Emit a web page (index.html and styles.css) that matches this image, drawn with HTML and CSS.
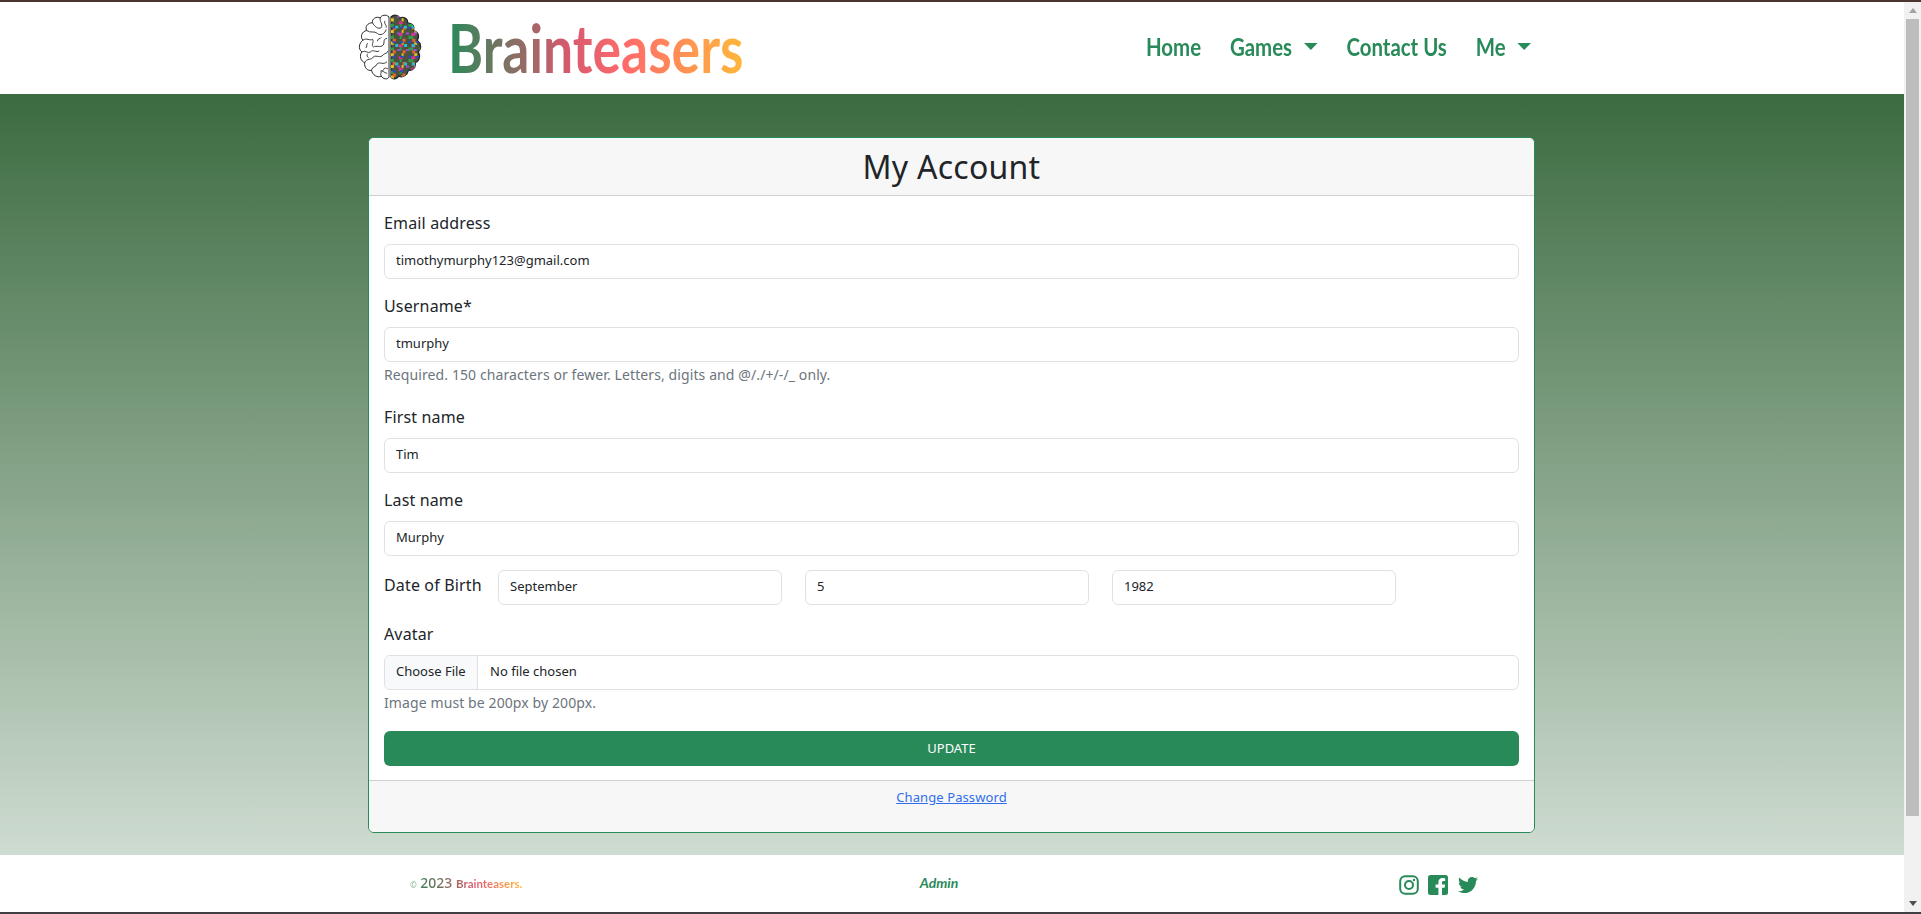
FILE: index.html
```html
<!DOCTYPE html>
<html lang="en">
<head>
  <meta charset="utf-8">
  <title>Brainteasers - My Account</title>
  <link rel="stylesheet" href="styles.css">
</head>
<body>
  <div class="frame">
    <div class="page">
      <header class="site-header">
        <div class="brand">
          <svg class="brain" viewBox="0 0 68 72" aria-hidden="true">
            <defs>
              <path id="lobe" d="M33 4C30 1 25 2 24 5C20 3 15 6 16 10C11 10 8 14 10 18C5 19 3 24 6 28C2 31 1 37 5 40C2 44 4 50 8 51C7 56 11 60 15 59C16 64 21 67 25 65C27 68 31 69 33 66Z"/>
              <clipPath id="right-lobe">
                <use href="#lobe" transform="matrix(-1 0 0 1 68 0)"/>
              </clipPath>
            </defs>
            <!-- left half, outline only -->
            <use href="#lobe" fill="#fff" stroke="#222" stroke-width="1"/>
            <path d="M24 5C23 9 27 11 25 15C22 17 18 14 16 10M10 18C14 21 18 18 21 21C24 24 29 21 30 17M29 8C27 11 31 12 30 15M6 28C10 25 13 29 16 27C18 30 14 33 17 35C20 33 24 36 27 33C29 30 26 27 31 26M5 40C9 38 11 42 14 40C16 37 20 41 23 39M8 51C10 46 15 49 17 45C20 43 24 47 27 43C29 41 31 42 32 39M15 59C15 55 20 56 21 52C24 50 27 54 31 50M25 65C23 61 27 60 28 57C30 56 31 58 32 57M11 31C9 33 11 35 9 36M21 29C21 26 24 27 25 25M12 46C10 45 10 43 11 42M24 60C26 58 28 62 31 62" fill="none" stroke="#222" stroke-width=".9"/>
            <!-- right half, coloured -->
            <use href="#lobe" transform="matrix(-1 0 0 1 68 0)" fill="#4a5240" stroke="#222" stroke-width="1.2"/>
            <g clip-path="url(#right-lobe)" fill="none" stroke-width="3.2">
              <path d="M35 7H66M35 19H66M35 31H66M35 43H66M35 55H66M35 66H66" stroke="#e8c322" stroke-dasharray="3 8 2 11"/>
              <path d="M35 10H66M35 22H66M35 34H66M35 46H66M35 58H66" stroke="#e0308c" stroke-dasharray="4 9" stroke-dashoffset="5"/>
              <path d="M35 13H66M35 25H66M35 37H66M35 49H66M35 61H66" stroke="#2f9f4a" stroke-dasharray="5 6 2 7" stroke-dashoffset="2"/>
              <path d="M35 16H66M35 28H66M35 40H66M35 52H66M35 64H66" stroke="#e8642a" stroke-dasharray="3 7" stroke-dashoffset="8"/>
              <path d="M38 3V70M46 3V70M54 3V70M62 3V70" stroke="#2a49c8" stroke-dasharray="2 13" stroke-dashoffset="4"/>
              <path d="M41 3V70M50 3V70M58 3V70" stroke="#28c0c8" stroke-dasharray="3 16" stroke-dashoffset="9"/>
              <path d="M43 3V70M52 3V70M60 3V70" stroke="#9a4fd0" stroke-dasharray="2 15"/>
            </g>
          </svg>
          <span class="brand-name">Brainteasers</span>
        </div>
        <nav class="main-nav">
          <a href="#">Home</a>
          <a href="#" class="has-caret">Games</a>
          <a href="#">Contact Us</a>
          <a href="#" class="has-caret">Me</a>
        </nav>
      </header>

      <main class="content">
        <section class="card">
          <h1 class="card-header">My Account</h1>
          <form class="card-body">
            <div class="field">
              <label>Email address</label>
              <input class="text-input" type="text" value="timothymurphy123@gmail.com">
            </div>
            <div class="field">
              <label>Username*</label>
              <input class="text-input" type="text" value="tmurphy">
              <small class="help">Required. 150 characters or fewer. Letters, digits and @/./+/-/_ only.</small>
            </div>
            <div class="field">
              <label>First name</label>
              <input class="text-input" type="text" value="Tim">
            </div>
            <div class="field">
              <label>Last name</label>
              <input class="text-input" type="text" value="Murphy">
            </div>
            <div class="field date-row">
              <label>Date of Birth</label>
              <div class="text-input date-part">September</div>
              <div class="text-input date-part">5</div>
              <div class="text-input date-part">1982</div>
            </div>
            <div class="field">
              <label>Avatar</label>
              <div class="text-input file-input">
                <span class="file-button">Choose File</span>
                <span class="file-name">No file chosen</span>
              </div>
              <small class="help">Image must be 200px by 200px.</small>
            </div>
            <button class="update-button" type="button">UPDATE</button>
          </form>
          <div class="card-footer"><a href="#">Change Password</a></div>
        </section>
      </main>

      <footer class="site-footer">
        <div class="copyright"><span class="copyright-text"><span class="copyright-mark">©</span> 2023 <span class="display-font">Brainteasers.</span></span></div>
        <div class="admin"><a href="#">Admin</a></div>
        <div class="social">
          <svg viewBox="0 0 20 20" class="social-icon" aria-hidden="true">
            <rect x="1.2" y="1.2" width="17.6" height="17.6" rx="5" fill="none" stroke="#298a59" stroke-width="2"/>
            <circle cx="10" cy="10" r="4" fill="none" stroke="#298a59" stroke-width="2"/>
            <circle cx="15" cy="5" r="1.2" fill="#298a59"/>
          </svg>
          <svg viewBox="0 0 20 20" class="social-icon" aria-hidden="true">
            <path d="M2.5 0H17.5A2.5 2.5 0 0 1 20 2.5V17.5A2.5 2.5 0 0 1 17.5 20H14V12.8H16.6L17.1 9.6H14V7.7C14 6.8 14.4 6.1 15.7 6.1H17.2V3.4C16.3 3.2 15.4 3.1 14.5 3.1C11.9 3.1 10.4 4.7 10.4 7.3V9.6H7.6V12.8H10.4V20H2.5A2.5 2.5 0 0 1 0 17.5V2.5A2.5 2.5 0 0 1 2.5 0Z" fill="#298a59"/>
          </svg>
          <svg viewBox="0 0 512 512" class="social-icon wide" aria-hidden="true">
            <path d="M459.4 151.7c.3 4.5.3 9.1.3 13.6 0 138.7-105.6 298.6-298.6 298.6-59.5 0-114.7-17.2-161.1-47.1 8.4 1 16.6 1.3 25.3 1.3 49.1 0 94.2-16.6 130.3-44.8-46.1-1-84.8-31.2-98.1-72.8 6.5 1 13 1.6 19.8 1.6 9.4 0 18.8-1.3 27.6-3.6-48.1-9.7-84.1-52-84.1-103v-1.3c14 7.8 30.2 12.7 47.4 13.3-28.3-18.8-46.8-51-46.8-87.4 0-19.5 5.2-37.4 14.3-53 51.7 63.7 129.3 105.3 216.4 109.8-1.6-7.8-2.6-15.9-2.6-24 0-57.8 46.8-104.9 104.9-104.9 30.2 0 57.5 12.7 76.7 33.1 23.7-4.5 46.5-13.3 66.6-25.3-7.8 24-24.4 44.2-46.1 57.2 21.1-2.3 41.6-8.1 60.4-16.2-14.3 20.8-32.2 39.3-52.6 54.3z" fill="#298a59"/>
          </svg>
        </div>
      </footer>
    </div>
    <div class="scrollbar">
      <span class="arrow-up"></span>
      <div class="scrollbar-thumb"></div>
      <span class="arrow-down"></span>
    </div>
  </div>
</body>
</html>
```
FILE: styles.css
```css
* {
  box-sizing: border-box;
}

html, body {
  height: 100%;
  margin: 0;
}

body {
  font-family: "Noto Sans", "Open Sans", sans-serif;
  color: #212529;
  background-color: #444;
}

/* thin window edge: dark line top and bottom of the shot */
.frame {
  display: flex;
  height: 100%;
  padding: 2px 0;
  background: linear-gradient(to bottom, #4c3430 50%, #3c4043 50%);
}

.page {
  flex: 1;
  min-width: 0;
  overflow: hidden;
  background-color: #fff;
}

/* Scrollbar */
.scrollbar {
  display: flex;
  flex-direction: column;
  align-items: center;
  flex: none;
  width: 17px;
  background-color: #f1f1f1;
}

.arrow-up {
  margin: 6px 0 6px;
  border-bottom: 5px solid #a3a3a3;
  border-left: 4px solid transparent;
  border-right: 4px solid transparent;
}

.scrollbar-thumb {
  width: 13px;
  height: 797px;
  background-color: #bdbdbd;
}

.arrow-down {
  margin-top: 85px;
  border-top: 5px solid #505050;
  border-left: 4px solid transparent;
  border-right: 4px solid transparent;
}

/* Header */
.site-header {
  display: flex;
  align-items: center;
  justify-content: space-between;
  height: 92px;
  padding: 0 373px 0 357px;
  background-color: #fff;
}

.brand {
  display: flex;
  align-items: center;
  gap: 25px;
}

.brain {
  width: 66px;
  height: 70px;
}

/* no hand lettered font here, so a big Lato squeezed sideways */
.brand-name {
  font-family: "Lato", sans-serif;
  font-size: 66px;
  font-weight: 700;
  line-height: 70px;
  background: linear-gradient(to right, #298a59 0%, #d4596e 40%, #ff6b6b 60%, #ffb83a 100%);
  -webkit-background-clip: text;
  background-clip: text;
  color: transparent;
  transform: scaleX(.81);
  transform-origin: left center;
}

.main-nav {
  display: flex;
  align-items: center;
  gap: 34px;
  margin-top: -3px;
  transform: scaleX(.85);
  transform-origin: right center;
}

.main-nav a {
  font-family: "Lato", sans-serif;
  font-size: 24px;
  font-weight: 700;
  color: #298a59;
  text-decoration: none;
}

.has-caret::after {
  content: "";
  display: inline-block;
  margin-left: 14px;
  vertical-align: 6px;
  border-top: 7px solid #298a59;
  border-left: 8px solid transparent;
  border-right: 8px solid transparent;
}

/* Main area with gradient */
.content {
  height: 761px;
  padding: 43px 0 0 368px;
  background: linear-gradient(to bottom, #3c6b40 0%, #cfdcd1 100%);
}

.card {
  display: flex;
  flex-direction: column;
  width: 1167px;
  height: 696px;
  background-color: #fff;
  border: 1px solid #298a59;
  border-radius: 6px;
  overflow: hidden;
}

.card-header {
  height: 60px;
  margin: 0;
  font-size: 32px;
  font-weight: 400;
  line-height: 57px;
  letter-spacing: .25px;
  text-align: center;
  background-color: #f7f7f7;
  border-bottom: 1px solid #cfcfcf;
}

.card-body {
  display: flex;
  flex-direction: column;
  flex: 1;
  padding: 12px 15px 14px;
}

.field {
  margin-bottom: 12px;
}

.field label {
  display: block;
  height: 36px;
  padding-top: 3px;
  font-size: 16px;
  line-height: 24px;
  letter-spacing: .15px;
  white-space: nowrap;
}

.text-input {
  display: block;
  width: 100%;
  height: 35px;
  padding: 0 11px 3px;
  font-family: inherit;
  font-size: 13px;
  line-height: 30px;
  color: #212529;
  background-color: #fff;
  border: 1px solid #dee2e6;
  border-radius: 6px;
}

.help {
  display: block;
  margin-top: 3px;
  margin-bottom: 5px;
  font-size: 14px;
  line-height: 20px;
  letter-spacing: .1px;
  color: #6c757d;
}

.date-row {
  display: flex;
  gap: 23px;
  align-items: flex-start;
  margin-top: 2px;
  margin-bottom: 13px;
}

.date-row label {
  width: 97px;
  margin-right: -6px;
  flex: none;
}

.date-part {
  width: 284px;
  flex: none;
}

.file-input {
  display: flex;
  padding: 0;
}

.file-button {
  width: 93px;
  padding-left: 11px;
  background-color: #f8f9fa;
  border-right: 1px solid #dee2e6;
  border-radius: 6px 0 0 6px;
}

.file-name {
  padding-left: 12px;
}

.update-button {
  height: 35px;
  margin-top: 1px;
  padding-bottom: 3px;
  font-family: inherit;
  font-size: 13px;
  color: #fff;
  background-color: #298a59;
  border: none;
  border-radius: 6px;
}

.card-footer {
  height: 53px;
  padding-top: 7px;
  font-size: 13px;
  letter-spacing: .1px;
  text-align: center;
  background-color: #f7f7f7;
  border-top: 1px solid #cfcfcf;
}

.card-footer a {
  color: #2f6fed;
}

/* Footer */
.site-footer {
  display: grid;
  grid-template-columns: 1fr 1fr 1fr;
  align-items: center;
  height: 57px;
  padding: 3px 368px 0;
  background-color: #fff;
}

.copyright {
  margin-bottom: 6px;
  padding-left: 42px;
  font-size: 14px;
  font-weight: 500;
}

.copyright-text {
  background: linear-gradient(to right, #8fbf9f 0%, #4a7a58 12%, #8a6a60 35%, #e85a70 60%, #ffb83a 100%);
  -webkit-background-clip: text;
  background-clip: text;
  color: transparent;
}

.copyright-mark {
  font-size: 8px;
}

.display-font {
  font-family: "Lato", sans-serif;
  font-size: 11.5px;
  font-weight: 700;
}

.admin {
  margin-bottom: 6px;
  padding-right: 26px;
  text-align: center;
  font-family: "Lato", sans-serif;
  font-size: 14px;
  font-weight: 700;
  font-style: italic;
}

.admin a {
  color: #298a59;
  text-decoration: none;
}

.social {
  display: flex;
  justify-content: center;
  gap: 9px;
  padding-left: 195px;
}

.social-icon {
  width: 20px;
  height: 20px;
}

.social-icon.wide {
  width: 22px;
}
```
